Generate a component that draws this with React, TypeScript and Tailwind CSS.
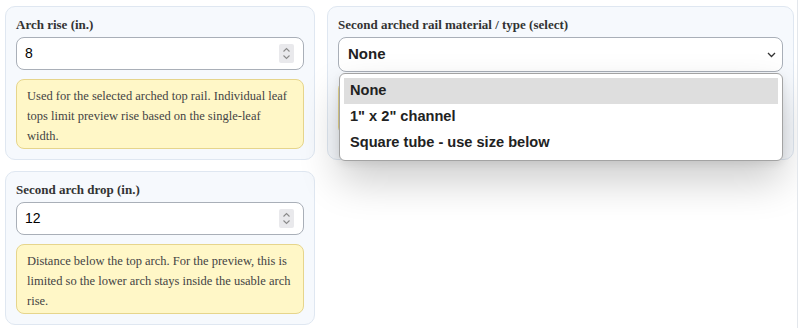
import { useState } from 'react';

const serif = { fontFamily: '"Liberation Serif", "Times New Roman", serif' };
const sans = { fontFamily: '"Liberation Sans", Arial, sans-serif' };

const Spinner = () => (
  <div className="flex h-[19px] w-[15px] items-center justify-center rounded-[2px] bg-[#e9e9ec]">
    <svg width="9" height="15" viewBox="0 0 9 15" fill="none" stroke="#8a8a8a" strokeWidth="1.1">
      <path d="M1.5 5.5 L4.5 2.5 L7.5 5.5" />
      <path d="M1.5 9.5 L4.5 12.5 L7.5 9.5" />
    </svg>
  </div>
);

const NumberField = ({ label, value, note }: { label: string; value: string; note: string }) => (
  <div className="rounded-[10px] border border-[#dfe7f1] bg-[#f6f9fd] px-[10px] pb-[10px] pt-[10px]">
    <div className="mb-[4px] text-[13px] font-bold leading-[16px] text-[#333]" style={serif}>
      {label}
    </div>
    <div className="flex h-[33px] items-center justify-between rounded-[8px] border border-[#a9afb8] bg-white pl-[8px] pr-[9px]">
      <span className="text-[14px] text-black" style={sans}>{value}</span>
      <Spinner />
    </div>
    <div
      className="mt-[9px] rounded-[8px] border border-[#e6d58c] bg-[#fff7c7] px-[10px] pb-[2px] pt-[6px] text-[12.5px] leading-[20px] text-[#444]"
      style={serif}
    >
      {note}
    </div>
  </div>
);

const options = ['None', '1" x 2" channel', 'Square tube - use size below'];

export default function App() {
  const [selected] = useState('None');

  return (
    <div className="h-[328px] w-[798px] overflow-hidden border-r border-[#e3e7ec] bg-white">
      <div className="grid grid-cols-[310px_467px] gap-x-3 gap-y-[11px] pl-[5px] pt-[6px]">
        <NumberField
          label="Arch rise (in.)"
          value="8"
          note="Used for the selected arched top rail. Individual leaf tops limit preview rise based on the single-leaf width."
        />

        <div className="relative rounded-[10px] border border-[#dfe7f1] bg-[#f6f9fd] px-[10px] pb-[10px] pt-[10px]">
          <div className="mb-[4px] text-[13px] font-bold leading-[16px] text-[#333]" style={serif}>
            Second arched rail material / type (select)
          </div>
          <div className="flex h-[35px] items-center justify-between rounded-[8px] border border-[#a9afb8] bg-white pl-[9px] pr-[6px]">
            <span className="text-[15px] font-bold text-[#222]" style={sans}>{selected}</span>
            <svg width="9" height="6" viewBox="0 0 9 6" fill="none" stroke="#333" strokeWidth="1.3">
              <path d="M1 1 L4.5 4.5 L8 1" />
            </svg>
          </div>
          <div className="mt-[9px] h-[54px] rounded-[8px] border border-[#e6d58c] bg-[#fff7c7]" />

          <div className="absolute left-[11px] top-[66px] w-[444px] rounded-[6px] border border-[#a3a3a3] bg-white p-[4px] shadow-[0_20px_40px_rgba(0,0,0,0.2),0_3px_8px_rgba(0,0,0,0.08)]">
            {options.map((o) => (
              <div
                key={o}
                className={`flex h-[26px] items-center px-[6px] text-[14.6px] font-bold text-[#222] ${o === selected ? 'bg-[#dedede]' : ''}`}
                style={sans}
              >
                {o}
              </div>
            ))}
          </div>
        </div>

        <NumberField
          label="Second arch drop (in.)"
          value="12"
          note="Distance below the top arch. For the preview, this is limited so the lower arch stays inside the usable arch rise."
        />
      </div>
    </div>
  );
}
